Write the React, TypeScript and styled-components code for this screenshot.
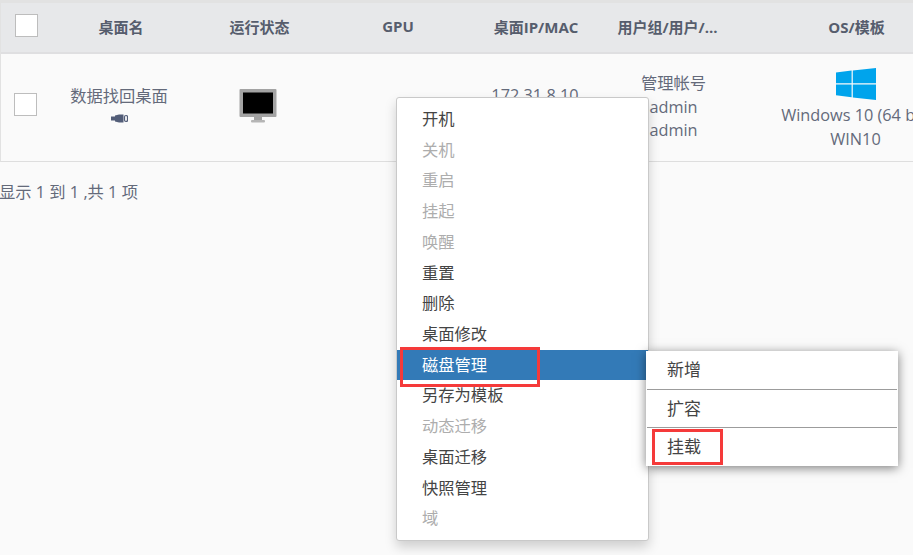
import React from "react";
import styled, { createGlobalStyle } from "styled-components";

const GlobalStyle = createGlobalStyle`
  html, body {
    margin: 0;
    padding: 0;
    width: 913px;
    height: 555px;
    overflow: hidden;
    background: #fafafa;
  }
`;

const menuItems = [
  { label: "开机" },
  { label: "关机", disabled: true },
  { label: "重启", disabled: true },
  { label: "挂起", disabled: true },
  { label: "唤醒", disabled: true },
  { label: "重置" },
  { label: "删除" },
  { label: "桌面修改" },
  { label: "磁盘管理", active: true },
  { label: "另存为模板" },
  { label: "动态迁移", disabled: true },
  { label: "桌面迁移" },
  { label: "快照管理" },
  { label: "域", disabled: true },
];

const subItems = ["新增", "扩容", "挂载"];

const MonitorIcon = () => (
  <svg width="38" height="34" viewBox="0 0 38 34">
    <rect x="0.5" y="0" width="37" height="28" rx="1" fill="#a3a3a3" />
    <rect x="4" y="3.5" width="30" height="21" fill="#000" />
    <rect x="15" y="28" width="8" height="3" fill="#a3a3a3" />
    <rect x="12" y="31" width="14" height="2.5" rx="1" fill="#b5b5b5" />
  </svg>
);

const WindowsIcon = () => (
  <svg width="40" height="32" viewBox="0 0 40 32">
    <path d="M0 4.6 15.6 2.6V15.2H0Z" fill="#00a4ec" />
    <path d="M16.8 2.4 40 0V15.2H16.8Z" fill="#00a4ec" />
    <path d="M0 16.4H15.6V29.2L0 27.2Z" fill="#00a4ec" />
    <path d="M16.8 16.4H40V32L16.8 29.4Z" fill="#00a4ec" />
  </svg>
);

const PlugIcon = () => (
  <svg width="17" height="9" viewBox="0 0 17 9">
    <rect x="0" y="2.5" width="5" height="4" fill="#525d78" />
    <path d="M4 1.5 8 0.5H12.5V8.5H8L4 7.5Z" fill="#525d78" />
    <rect x="13.5" y="1.5" width="3" height="6" rx="1.4" fill="none" stroke="#525d78" strokeWidth="1.2" />
  </svg>
);

export default function App() {
  return (
    <Page>
      <GlobalStyle />
      <Table>
        <HeaderRow>
          <CheckCell>
            <CheckBox />
          </CheckCell>
          <HeaderCell>桌面名</HeaderCell>
          <HeaderCell>运行状态</HeaderCell>
          <HeaderCell>GPU</HeaderCell>
          <HeaderCell>桌面IP/MAC</HeaderCell>
          <HeaderCell $clipped>用户组/用户/...</HeaderCell>
          <HeaderCell>OS/模板</HeaderCell>
        </HeaderRow>
        <BodyRow>
          <CheckCell>
            <CheckBox $inRow />
          </CheckCell>
          <NameCell>
            <Line>数据找回桌面</Line>
            <PlugSlot>
              <PlugIcon />
            </PlugSlot>
          </NameCell>
          <BodyCell>
            <MonitorSlot>
              <MonitorIcon />
            </MonitorSlot>
          </BodyCell>
          <BodyCell />
          <BodyCell>
            <Line>172.31.8.10</Line>
            <Line>&nbsp;</Line>
          </BodyCell>
          <BodyCell>
            <Line>管理帐号</Line>
            <Line>admin</Line>
            <Line>admin</Line>
          </BodyCell>
          <OsCell>
            <WindowsSlot>
              <WindowsIcon />
            </WindowsSlot>
            <Line>Windows 10 (64 bit)</Line>
            <Line>WIN10</Line>
          </OsCell>
        </BodyRow>
      </Table>
      <Footer>显示 1 到 1 ,共 1 项</Footer>

      <ContextMenu>
        {menuItems.map((item) => (
          <MenuItem key={item.label} $disabled={item.disabled} $active={item.active}>
            {item.label}
          </MenuItem>
        ))}
      </ContextMenu>

      <SubMenu>
        {subItems.map((label) => (
          <SubItem key={label}>{label}</SubItem>
        ))}
      </SubMenu>

      <Highlight $x={400} $y={347} $w={140} $h={40} />
      <Highlight $x={652} $y={429} $w={71} $h={36} />
    </Page>
  );
}

const Page = styled.div`
  position: relative;
  width: 913px;
  height: 555px;
  overflow: hidden;
  background: #fafafa;
  color: #646a7a;
  font-family: "Open Sans", "Noto Sans CJK SC", sans-serif;
  font-size: 16.3px;
`;

const Table = styled.div`
  width: 968px;
  border-top: 3px solid #e2e2e2;
  border-left: 1px solid #e2e2e2;
  border-bottom: 1px solid #dedede;
`;

const columns = "50px 138px 139px 138px 138px 139px 225px";

const HeaderRow = styled.div`
  display: grid;
  grid-template-columns: ${columns};
  height: 49px;
  align-items: center;
  background: #e7e8ea;
  border-bottom: 2px solid #dfdfe1;
`;

const HeaderCell = styled.div<{ $clipped?: boolean }>`
  text-align: center;
  font-size: 15px;
  font-weight: 700;
  color: #565d6d;
  margin-top: -3px;
  padding-left: ${(p) => (p.$clipped ? "0" : "2px")};
  padding-right: ${(p) => (p.$clipped ? "12px" : "0")};
`;

const CheckCell = styled.div`
  display: flex;
  justify-content: flex-start;
`;

const CheckBox = styled.div<{ $inRow?: boolean }>`
  box-sizing: border-box;
  width: 23px;
  height: 23px;
  margin-left: ${(p) => (p.$inRow ? "13px" : "14px")};
  margin-top: ${(p) => (p.$inRow ? "-7px" : "-5px")};
  background: #fff;
  border: 1px solid #bdbdbd;
`;

const BodyRow = styled.div`
  display: grid;
  grid-template-columns: ${columns};
  height: 107px;
  align-items: center;
`;

const BodyCell = styled.div`
  display: flex;
  flex-direction: column;
  align-items: center;
  text-align: center;
  white-space: nowrap;
`;

const NameCell = styled(BodyCell)`
  margin-top: -5px;
  padding-right: 2px;
`;

const OsCell = styled(BodyCell)`
  margin-top: 4px;
`;

const Line = styled.div`
  line-height: 23.5px;
`;

const PlugSlot = styled.div`
  display: flex;
  height: 11px;
  margin-top: 6px;
`;

const MonitorSlot = styled.div`
  display: flex;
  margin-top: -3px;
  margin-right: 2px;
`;

const WindowsSlot = styled.div`
  display: flex;
  margin-bottom: 4px;
`;

const Footer = styled.div`
  margin-top: 19px;
  margin-left: -1px;
  line-height: 22px;
  color: #646a7a;
`;

const ContextMenu = styled.div`
  position: absolute;
  left: 396px;
  top: 97px;
  box-sizing: border-box;
  width: 253px;
  height: 444px;
  padding: 6px 0;
  background: #fff;
  border: 1px solid #c9c9c9;
  border-radius: 3px;
  box-shadow: 0 6px 12px rgba(0, 0, 0, 0.175);
`;

const MenuItem = styled.div<{ $disabled?: boolean; $active?: boolean }>`
  height: 30.72px;
  line-height: 30.72px;
  padding-left: 25px;
  color: ${(p) => (p.$active ? "#fff" : p.$disabled ? "#adadad" : "#444")};
  background: ${(p) => (p.$active ? "#337ab7" : "transparent")};
`;

const SubMenu = styled.div`
  position: absolute;
  left: 646px;
  top: 351px;
  box-sizing: border-box;
  width: 252px;
  height: 115px;
  padding: 0 1px;
  background: #fff;
  box-shadow: 0 2px 10px rgba(0, 0, 0, 0.5);
`;

const SubItem = styled.div`
  box-sizing: border-box;
  height: 38px;
  line-height: 37px;
  padding-left: 20px;
  font-size: 17px;
  color: #444;
  border-bottom: 1px solid #9c9c9c;

  &:first-child {
    height: 39px;
  }

  &:last-child {
    border-bottom: none;
  }
`;

const Highlight = styled.div<{ $x: number; $y: number; $w: number; $h: number }>`
  position: absolute;
  left: ${(p) => p.$x}px;
  top: ${(p) => p.$y}px;
  width: ${(p) => p.$w}px;
  height: ${(p) => p.$h}px;
  box-sizing: border-box;
  border: 3px solid #f53a3a;
`;
